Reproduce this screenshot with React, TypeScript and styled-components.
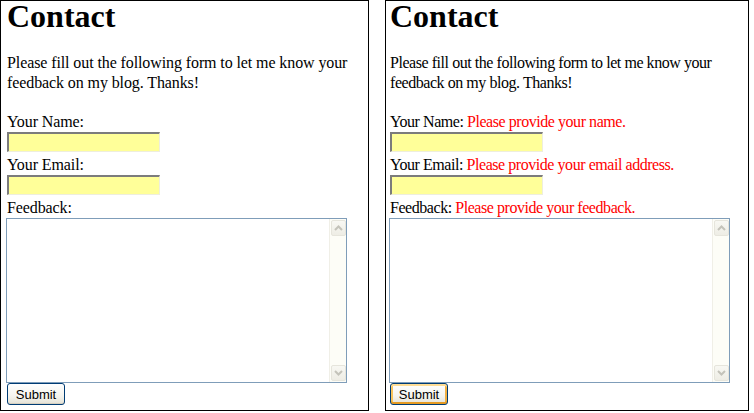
import styled, { createGlobalStyle } from "styled-components";

const GlobalStyle = createGlobalStyle`
  html, body {
    margin: 0;
    padding: 0;
    background: #ffffff;
  }
  body {
    font-family: "Liberation Serif", "Times New Roman", serif;
    font-size: 16px;
    color: #000000;
  }
`;

const Page = styled.div`
  display: flex;
  align-items: flex-start;
  gap: 16px;
`;

const Panel = styled.div<{ $width: number; $inset: number; $tight: number }>`
  width: ${(p) => p.$width}px;
  height: 411px;
  box-sizing: border-box;
  border: 1px solid #000000;
  padding: 0 0 0 ${(p) => p.$inset}px;
  display: flex;
  flex-direction: column;
  letter-spacing: ${(p) => p.$tight}px;
`;

const Title = styled.h1`
  font-size: 32px;
  font-weight: bold;
  line-height: 36px;
  margin: -3px 0 0;
  letter-spacing: 0;
`;

const Intro = styled.p`
  margin: 19px 0 18px;
  line-height: 20px;
  width: 352px;
`;

const Label = styled.label`
  display: block;
  line-height: 21px;
  white-space: nowrap;
`;

const ErrorText = styled.span`
  color: #ff0000;
`;

const TextInput = styled.input`
  display: block;
  box-sizing: border-box;
  width: 153px;
  height: 20px;
  margin: 0 0 2px;
  padding: 0 2px;
  background: #ffff99;
  border-style: solid;
  border-width: 2px 1px 1px 2px;
  border-color: #7c7c7c #eeeedd #eeeedd #7c7c7c;
  font-family: "Liberation Sans", Arial, sans-serif;
  font-size: 13px;
  outline: none;
`;

const AreaBox = styled.div`
  display: flex;
  box-sizing: border-box;
  width: 341px;
  height: 165px;
  margin: 0 0 1px -1px;
  border: 1px solid #7f9db9;
  background: #ffffff;
`;

const Area = styled.textarea`
  flex: 1;
  border: none;
  resize: none;
  outline: none;
  overflow: hidden;
  padding: 2px;
  font-family: "Liberation Mono", "Courier New", monospace;
  font-size: 13px;
  background: transparent;
`;

const ScrollTrack = styled.div`
  width: 17px;
  box-sizing: border-box;
  border-left: 1px solid #f0efe7;
  background: #fdfdf7;
  display: flex;
  flex-direction: column;
  justify-content: space-between;
  align-items: center;
  padding: 1px 0;
`;

const ScrollArrow = styled.div`
  width: 15px;
  height: 16px;
  box-sizing: border-box;
  border: 1px solid #e6e5dc;
  border-radius: 2px;
  background: linear-gradient(#f8f8f3, #eeede5);
  display: flex;
  align-items: center;
  justify-content: center;
`;

const SubmitButton = styled.button<{ $focused?: boolean }>`
  width: 58px;
  height: 22px;
  margin-top: -1px;
  padding: 0;
  box-sizing: border-box;
  border: 1px solid #003c74;
  border-radius: 3px;
  background: linear-gradient(#ffffff 0%, #f5f4ee 60%, #e3e1d6 100%);
  font-family: "Liberation Sans", Arial, sans-serif;
  font-size: 13px;
  letter-spacing: 0;
  color: #000000;
  box-shadow: ${(p) =>
    p.$focused
      ? "inset 0 2px 0 #ffdd95, inset 0 -2px 0 #e59a22, inset 2px 0 0 #f9c45c, inset -2px 0 0 #f1b043"
      : "inset 0 -1px 0 #d6d0c0"};
`;

function Chevron({ up }: { up?: boolean }) {
  return (
    <svg width="9" height="6" viewBox="0 0 9 6">
      <path
        d={up ? "M1 5 L4.5 1.5 L8 5" : "M1 1 L4.5 4.5 L8 1"}
        fill="none"
        stroke="#c4c3ba"
        strokeWidth="2"
      />
    </svg>
  );
}

function ContactForm({
  width,
  inset,
  tight,
  showErrors,
}: {
  width: number;
  inset: number;
  tight: number;
  showErrors?: boolean;
}) {
  return (
    <Panel $width={width} $inset={inset} $tight={tight}>
      <Title>Contact</Title>
      <Intro>
        Please fill out the following form to let me know your feedback on my
        blog. Thanks!
      </Intro>
      <Label>
        Your Name:{" "}
        {showErrors && <ErrorText>Please provide your name.</ErrorText>}
      </Label>
      <TextInput type="text" />
      <Label>
        Your Email:{" "}
        {showErrors && (
          <ErrorText>Please provide your email address.</ErrorText>
        )}
      </Label>
      <TextInput type="text" />
      <Label>
        Feedback:{" "}
        {showErrors && <ErrorText>Please provide your feedback.</ErrorText>}
      </Label>
      <AreaBox>
        <Area />
        <ScrollTrack>
          <ScrollArrow>
            <Chevron up />
          </ScrollArrow>
          <ScrollArrow>
            <Chevron />
          </ScrollArrow>
        </ScrollTrack>
      </AreaBox>
      <SubmitButton $focused={showErrors}>Submit</SubmitButton>
    </Panel>
  );
}

export default function App() {
  return (
    <>
      <GlobalStyle />
      <Page>
        <ContactForm width={369} inset={6} tight={-0.1} />
        <ContactForm width={364} inset={4} tight={-0.45} showErrors />
      </Page>
    </>
  );
}
